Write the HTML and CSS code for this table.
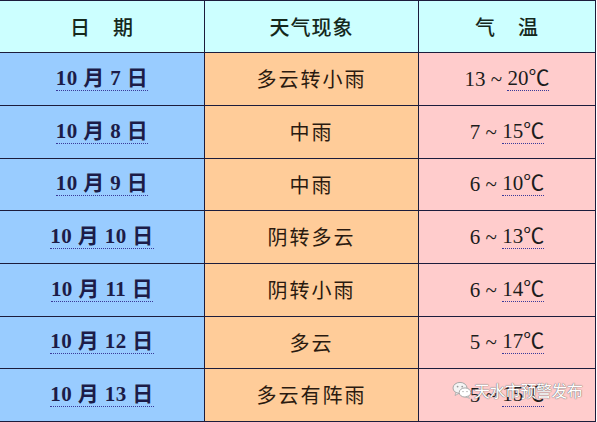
FILE: index.html
```html
<!DOCTYPE html>
<html lang="zh-CN">
<head>
<meta charset="utf-8">
<title>天气预报</title>
<link rel="stylesheet" href="styles.css">
</head>
<body>
<div class="sheet">
  <div class="cell head">日<span class="gap"></span>期</div>
  <div class="cell head">天气现象</div>
  <div class="cell head">气<span class="gap"></span>温</div>

  <div class="cell date"><span class="u">10 月 7 日</span></div>
  <div class="cell wx">多云转小雨</div>
  <div class="cell temp">13 ~ <span class="u">20℃</span></div>

  <div class="cell date"><span class="u">10 月 8 日</span></div>
  <div class="cell wx">中雨</div>
  <div class="cell temp">7 ~ <span class="u">15℃</span></div>

  <div class="cell date"><span class="u">10 月 9 日</span></div>
  <div class="cell wx">中雨</div>
  <div class="cell temp">6 ~ <span class="u">10℃</span></div>

  <div class="cell date"><span class="u">10 月 10 日</span></div>
  <div class="cell wx">阴转多云</div>
  <div class="cell temp">6 ~ <span class="u">13℃</span></div>

  <div class="cell date"><span class="u">10 月 11 日</span></div>
  <div class="cell wx">阴转小雨</div>
  <div class="cell temp">6 ~ <span class="u">14℃</span></div>

  <div class="cell date"><span class="u">10 月 12 日</span></div>
  <div class="cell wx">多云</div>
  <div class="cell temp">5 ~ <span class="u">17℃</span></div>

  <div class="cell date"><span class="u">10 月 13 日</span></div>
  <div class="cell wx">多云有阵雨</div>
  <div class="cell temp last">5 ~ <span class="u">15℃</span>
    <div class="mark">
      <svg class="wechat" width="20" height="18" viewBox="0 0 20 18">
        <ellipse cx="8" cy="7" rx="7" ry="5.6" fill="#f4f4f4" stroke="#a8a8a8" stroke-width="1"/>
        <path d="M4 11.5 L3 14.5 L7 12.4 Z" fill="#f4f4f4" stroke="#a8a8a8" stroke-width="0.8"/>
        <ellipse cx="13" cy="11.5" rx="5.8" ry="4.6" fill="#ffffff" stroke="#a8a8a8" stroke-width="1"/>
        <path d="M16 15 L17.5 17.4 L13.8 15.9 Z" fill="#ffffff" stroke="#a8a8a8" stroke-width="0.8"/>
        <circle cx="5.6" cy="5.6" r="0.9" fill="#9a9a9a"/>
        <circle cx="10.2" cy="5.6" r="0.9" fill="#9a9a9a"/>
        <circle cx="11" cy="10.6" r="0.7" fill="#9a9a9a"/>
        <circle cx="15" cy="10.6" r="0.7" fill="#9a9a9a"/>
      </svg>
      <span class="mark-text">天水市预警发布</span>
    </div>
  </div>
</div>
</body>
</html>
```

FILE: styles.css
```css
html, body {
  margin: 0;
  padding: 0;
  background: #ffffff;
}

.sheet {
  display: grid;
  grid-template-columns: 204px 213px 176px;
  grid-template-rows: 51px 52px 52px 51px 52px 52px 51px 52px;
  gap: 1px;
  padding: 1px 1px 1px 0;
  background: #1c1c3c;
  box-sizing: border-box;
  width: 596px;
}

.cell {
  display: flex;
  align-items: center;
  justify-content: center;
  font-size: 20px;
  line-height: 1;
  white-space: pre;
}

.head {
  background: #ccffff;
  color: #15281c;
  font-family: "Noto Sans CJK SC", sans-serif;
  font-weight: 500;
  letter-spacing: 1px;
}

.gap {
  display: inline-block;
  width: 22px;
}

.date {
  background: #99ccff;
  color: #1c1c48;
  font-family: "Liberation Serif", "Noto Sans CJK SC", serif;
  font-weight: 700;
  font-size: 21px;
  letter-spacing: 0.4px;
}

.wx {
  background: #ffcc99;
  color: #2a1a10;
  font-family: "Noto Sans CJK SC", sans-serif;
  font-size: 20px;
  letter-spacing: 2px;
}

.temp {
  background: #ffcccc;
  color: #1c1c1c;
  font-family: "Liberation Serif", "Noto Sans CJK SC", serif;
  font-size: 21px;
}

.u {
  border-bottom: 1px dotted #3a3a9a;
  padding-bottom: 1px;
}

.last {
  position: relative;
}

.mark {
  position: absolute;
  left: 33px;
  top: 12px;
  display: flex;
  align-items: center;
  gap: 2px;
}

.wechat {
  display: block;
}

.mark-text {
  font-family: "Noto Sans CJK SC", sans-serif;
  font-size: 16px;
  color: #ffffff;
  text-shadow: 0 0 1px #6a6a6a, 0 0 1px #6a6a6a;
  letter-spacing: -0.5px;
}
```
